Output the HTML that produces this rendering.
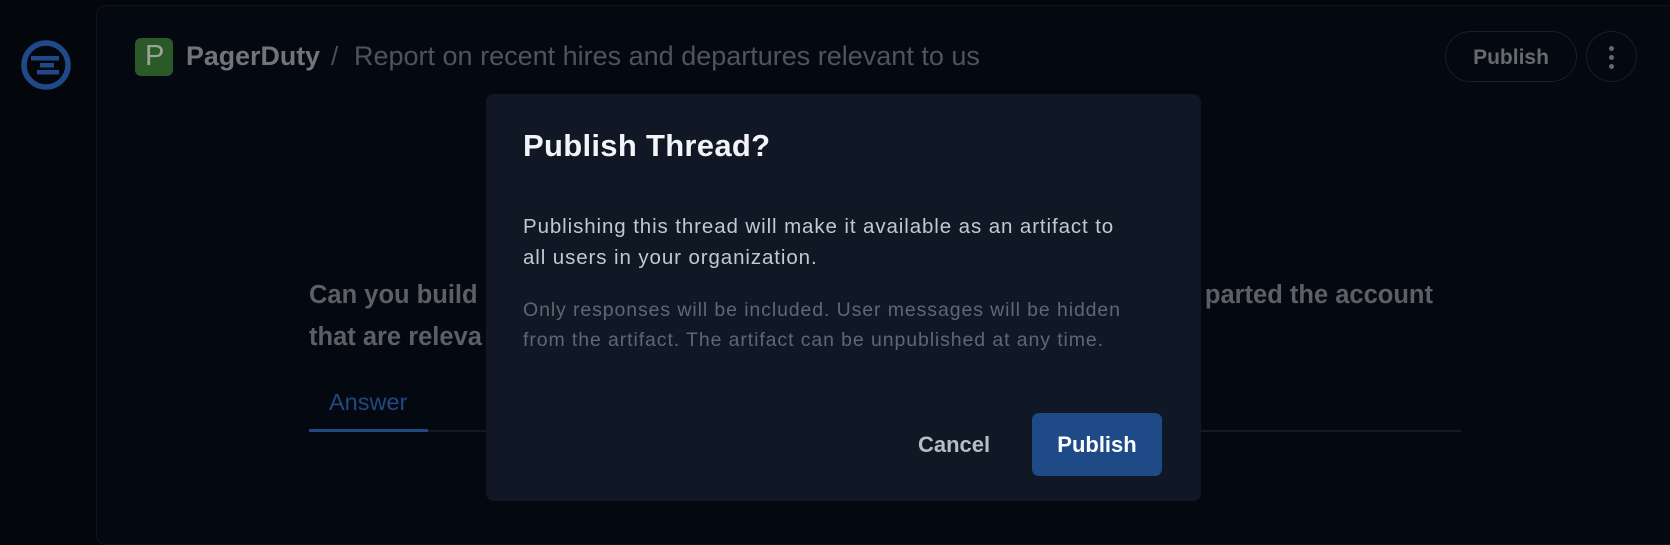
<!DOCTYPE html>
<html><head><style>
*{margin:0;padding:0;box-sizing:border-box}
body{width:1670px;height:518px;background:#03060b;font-family:"Liberation Sans",sans-serif;position:relative;overflow:hidden}
.panel{position:absolute;left:96px;top:5px;width:1600px;height:540px;border:1px solid #12161c;border-radius:10px;background:#040810}
.abs{position:absolute;white-space:nowrap}
</style></head><body>
<svg class="abs" style="left:20px;top:39px" width="52" height="52" viewBox="0 0 52 52">
<circle cx="26" cy="26" r="22" fill="none" stroke="#20498a" stroke-width="5.5"/>
<rect x="11" y="17" width="28" height="4.5" fill="#20498a"/>
<rect x="20" y="24" width="14" height="4.5" fill="#20498a"/>
<rect x="17" y="31" width="22" height="4.5" fill="#20498a"/>
</svg>
<div class="panel"></div>
<div class="abs" style="left:135px;top:38px;width:38px;height:38px;background:#2b5a28;border-radius:6px"></div>
<div class="abs" style="left:145px;top:40px;font-size:29px;color:#9aa598">P</div>
<div class="abs" style="left:186px;top:41px;font-size:26.8px;font-weight:bold;color:#727478">PagerDuty</div>
<div class="abs" style="left:331px;top:41px;font-size:26px;color:#4c5056">/</div>
<div class="abs" style="left:354px;top:41px;font-size:27px;color:#50545a">Report on recent hires and departures relevant to us</div>
<div class="abs" style="left:1445px;top:31px;width:132px;height:51px;border:1px solid #1a1e26;border-radius:26px;color:#66696e;font-size:21px;font-weight:bold;text-align:center;line-height:51px">Publish</div>
<div class="abs" style="left:1586px;top:31px;width:51px;height:51px;border:1px solid #1a1e26;border-radius:50%"></div>
<div class="abs" style="left:1609px;top:46px;width:5px;height:5px;border-radius:50%;background:#66696e;box-shadow:0 9px 0 #66696e,0 18px 0 #66696e"></div>
<div class="abs" style="left:309px;top:281px;font-size:25.5px;font-weight:bold;color:#5c5f64">Can you build</div>
<div class="abs" style="left:309px;top:323px;font-size:25.5px;font-weight:bold;color:#5c5f64">that are releva</div>
<div class="abs" style="right:237px;top:281px;font-size:25.5px;font-weight:bold;color:#5c5f64">parted the account</div>
<div class="abs" style="left:329px;top:389px;font-size:23.5px;color:#22497f">Answer</div>
<div class="abs" style="left:309px;top:430px;width:1152px;height:2px;background:#151920"></div>
<div class="abs" style="left:309px;top:429px;width:119px;height:3px;background:#1f4a80"></div>
<div class="abs" style="left:486px;top:94px;width:715px;height:407px;background:#0f1824;border-radius:8px">
<div class="abs" style="left:37px;top:34px;font-size:31px;font-weight:bold;color:#f2f4f7;letter-spacing:0.3px">Publish Thread?</div>
<div class="abs" style="left:37px;top:117px;font-size:20.5px;color:#c4c8cf;line-height:31px;letter-spacing:0.9px">Publishing this thread will make it available as an artifact to<br>all users in your organization.</div>
<div class="abs" style="left:37px;top:201px;font-size:19.5px;color:#5f6774;line-height:30px;letter-spacing:0.9px">Only responses will be included. User messages will be hidden<br>from the artifact. The artifact can be unpublished at any time.</div>
<div class="abs" style="left:432px;top:338px;font-size:22px;font-weight:bold;color:#b8bcc3">Cancel</div>
<div class="abs" style="left:546px;top:319px;width:130px;height:63px;background:#1f4a88;border-radius:7px;color:#fff;font-size:22px;font-weight:bold;text-align:center;line-height:63px">Publish</div>
</div>
</body></html>
